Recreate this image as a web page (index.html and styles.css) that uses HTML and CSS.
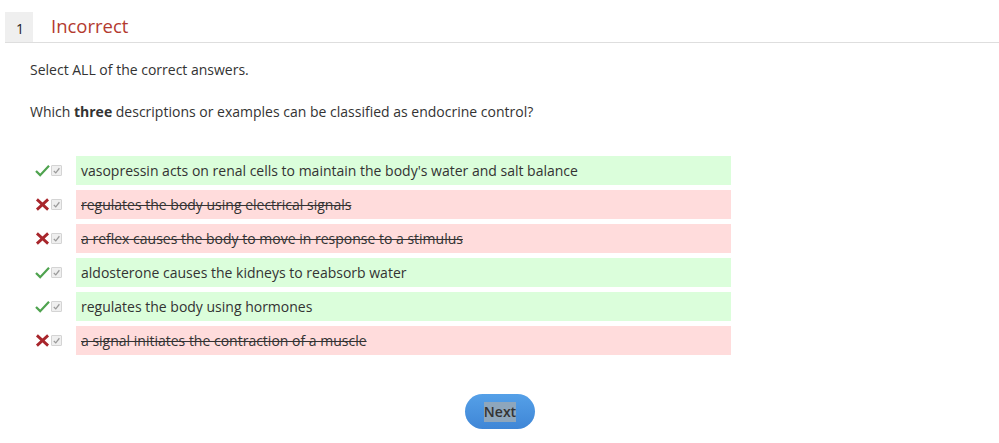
FILE: index.html
```html
<!DOCTYPE html>
<html>
<head>
<meta charset="utf-8">
<link rel="stylesheet" href="styles.css">
</head>
<body>
<div class="page">
  <div class="header">
    <div class="num">1</div>
    <div class="status">Incorrect</div>
  </div>
  <p class="instr">Select ALL of the correct answers.</p>
  <p class="question">Which <b>three</b> descriptions or examples can be classified as endocrine control?</p>
  <div class="answers">
    <div class="row">
      <div class="marks"><svg class="mark" viewBox="0 0 16 14"><path d="M1 7.5 L5.5 12 L15 2" fill="none" stroke="#4fa34f" stroke-width="2.4"/></svg><span class="box"><svg viewBox="0 0 10 10"><path d="M2 5.5 L4.2 7.6 L8.2 2.5" fill="none" stroke="#9a9a9a" stroke-width="1.4"/></svg></span></div>
      <div class="ans ok">vasopressin acts on renal cells to maintain the body's water and salt balance</div>
    </div>
    <div class="row">
      <div class="marks"><svg class="mark" viewBox="0 0 16 14"><path d="M2 1.5 L14 12.5 M14 1.5 L2 12.5" fill="none" stroke="#a8262c" stroke-width="3"/></svg><span class="box"><svg viewBox="0 0 10 10"><path d="M2 5.5 L4.2 7.6 L8.2 2.5" fill="none" stroke="#9a9a9a" stroke-width="1.4"/></svg></span></div>
      <div class="ans bad"><s>regulates the body using electrical signals</s></div>
    </div>
    <div class="row">
      <div class="marks"><svg class="mark" viewBox="0 0 16 14"><path d="M2 1.5 L14 12.5 M14 1.5 L2 12.5" fill="none" stroke="#a8262c" stroke-width="3"/></svg><span class="box"><svg viewBox="0 0 10 10"><path d="M2 5.5 L4.2 7.6 L8.2 2.5" fill="none" stroke="#9a9a9a" stroke-width="1.4"/></svg></span></div>
      <div class="ans bad"><s>a reflex causes the body to move in response to a stimulus</s></div>
    </div>
    <div class="row">
      <div class="marks"><svg class="mark" viewBox="0 0 16 14"><path d="M1 7.5 L5.5 12 L15 2" fill="none" stroke="#4fa34f" stroke-width="2.4"/></svg><span class="box"><svg viewBox="0 0 10 10"><path d="M2 5.5 L4.2 7.6 L8.2 2.5" fill="none" stroke="#9a9a9a" stroke-width="1.4"/></svg></span></div>
      <div class="ans ok">aldosterone causes the kidneys to reabsorb water</div>
    </div>
    <div class="row">
      <div class="marks"><svg class="mark" viewBox="0 0 16 14"><path d="M1 7.5 L5.5 12 L15 2" fill="none" stroke="#4fa34f" stroke-width="2.4"/></svg><span class="box"><svg viewBox="0 0 10 10"><path d="M2 5.5 L4.2 7.6 L8.2 2.5" fill="none" stroke="#9a9a9a" stroke-width="1.4"/></svg></span></div>
      <div class="ans ok">regulates the body using hormones</div>
    </div>
    <div class="row">
      <div class="marks"><svg class="mark" viewBox="0 0 16 14"><path d="M2 1.5 L14 12.5 M14 1.5 L2 12.5" fill="none" stroke="#a8262c" stroke-width="3"/></svg><span class="box"><svg viewBox="0 0 10 10"><path d="M2 5.5 L4.2 7.6 L8.2 2.5" fill="none" stroke="#9a9a9a" stroke-width="1.4"/></svg></span></div>
      <div class="ans bad"><s>a signal initiates the contraction of a muscle</s></div>
    </div>
  </div>
  <div class="footer">
    <button class="next"><span class="label">Next</span></button>
  </div>
</div>
</body>
</html>
```
FILE: styles.css
```css
* { box-sizing: border-box; }
html, body { margin: 0; padding: 0; background: #fff; }
body { font-family: "Open Sans", "Liberation Sans", sans-serif; color: #333; font-size: 14px; }
.page { padding: 12px 0 0 5px; width: 999px; }
.header {
  display: flex; align-items: stretch; height: 31px;
  border-bottom: 1px solid #dedede;
}
.num {
  width: 28px; background: #efefef; color: #222;
  font-size: 14px; display: flex; align-items: center; justify-content: center;
  padding-top: 2px; padding-left: 2px;
}
.status {
  margin-left: 18px; color: #b33a2f; font-size: 18.5px; line-height: 28px;
}
.instr { margin: 17px 0 0 25px; line-height: 20px; }
.question { margin: 22px 0 0 25px; line-height: 20px; }
.answers { margin-top: 34px; display: flex; flex-direction: column; gap: 5px; }
.row { display: flex; align-items: center; }
.marks { width: 71px; display: flex; align-items: center; padding-left: 30px; gap: 1px; }
.mark { width: 15px; height: 13px; }
.box {
  width: 11px; height: 11px; border: 1px solid #d4d4d4; background: #efefef;
  display: inline-flex; border-radius: 1px;
}
.box svg { width: 9px; height: 9px; }
.ans {
  width: 655px; height: 29px; line-height: 29px; padding-left: 5px;
  font-size: 14px; color: #333;
}
.ans.ok { background: #dbfedb; }
.ans.bad { background: #ffdcdc; }
.ans s { text-decoration-thickness: 1px; }
.footer { display: flex; justify-content: center; padding-right: 4px; margin-top: 39px; }
.next {
  width: 70px; height: 35px; border-radius: 18px; border: none;
  background: linear-gradient(#55a0e8, #3f86d6);
  font-family: "Open Sans", "Liberation Sans", sans-serif;
  font-size: 14px; font-weight: 600; color: #333; padding: 0;
  display: flex; align-items: center; justify-content: center;
}
.label { background: #8ea6bc; padding: 1px 0; line-height: 18px; }
```
